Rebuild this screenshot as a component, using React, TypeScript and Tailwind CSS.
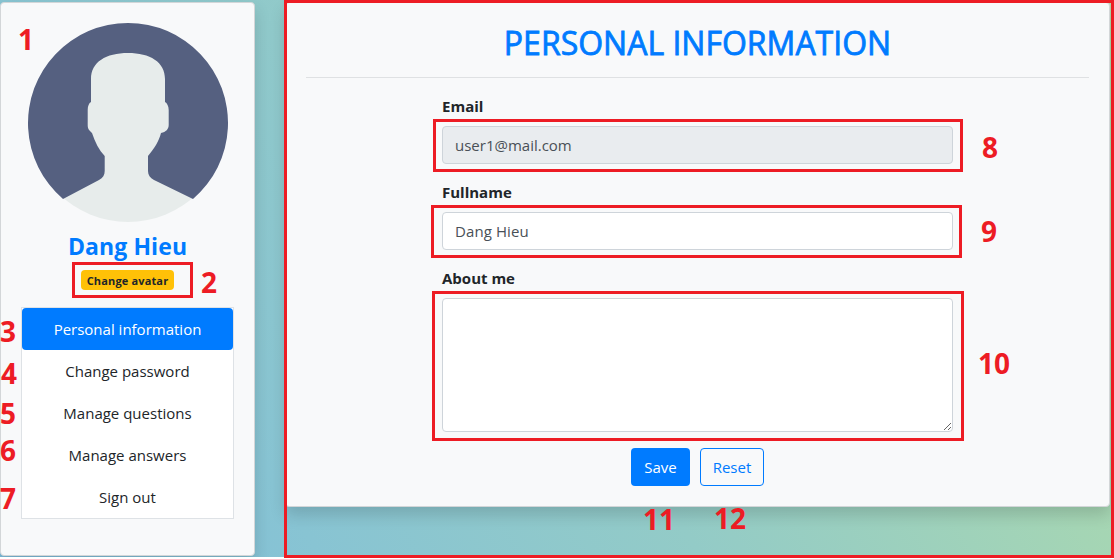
import React from "react";

const MENU = ["Personal information", "Change password", "Manage questions", "Manage answers", "Sign out"];

const MARKS = [
  { n: "1", pos: "left-[18px] top-[20px]" },
  { n: "2", pos: "left-[201px] top-[263px]" },
  { n: "3", pos: "left-[0px] top-[312px]" },
  { n: "4", pos: "left-[1px] top-[354px]" },
  { n: "5", pos: "left-[0px] top-[394px]" },
  { n: "6", pos: "left-[0px] top-[431px]" },
  { n: "7", pos: "left-[0px] top-[479px]" },
  { n: "8", pos: "left-[982px] top-[128px]" },
  { n: "9", pos: "left-[981px] top-[212px]" },
  { n: "10", pos: "left-[978px] top-[344px]" },
  { n: "11", pos: "left-[643px] top-[500px]" },
  { n: "12", pos: "left-[714px] top-[499px]" },
];

const FRAMES = [
  "left-[284px] top-0 h-[558px] w-[830px]",
  "left-[72px] top-[262px] h-[36px] w-[121px]",
  "left-[433px] top-[119px] h-[53px] w-[530px]",
  "left-[431px] top-[205px] h-[53px] w-[531px]",
  "left-[432px] top-[291px] h-[150px] w-[532px]",
];

function Avatar() {
  return (
    <svg className="block h-[200px] w-[200px] shrink-0" viewBox="0 0 200 200" aria-hidden="true">
      <circle cx="100" cy="100" r="99" fill="#e7eceb" />
      <path
        fill="#556080"
        d="M35 176A100 100 0 1 1 165 176L126 157C122 155 120 152 120 148V133C126 126 131 118 133 110C138 109 140.700 106 140.700 102V87C140.700 83 139 80 137 79V56C137 39 122 30 100 30S63 39 63 56V79C61 80 59.700 83 59.700 87V102C59.700 106 61 107 64 110C67 119 71 127 76.700 133V148C76.700 152 75 155 71 157Z"
      />
    </svg>
  );
}

function Field({ label, children }: { label: string; children: React.ReactNode }) {
  return (
    <div className="mb-4 flex flex-col">
      <label className="mb-2 text-[15px] leading-6 font-bold">{label}</label>
      {children}
    </div>
  );
}

export default function App() {
  return (
    <div className="relative h-[559px] w-[1114px] overflow-hidden bg-white font-['Open_Sans','Noto_Sans',sans-serif] text-[15px] text-[#212529]">
      <div className="flex h-[557px] items-start gap-[30px] overflow-hidden bg-[linear-gradient(58deg,#7ebddc_0%,#88c4d3_22%,#93cbc7_48%,#a6d6b3_78%,#aedba9_100%)] pt-[2px]">
        <aside className="flex h-[554px] w-[255px] flex-col items-center rounded border border-[#d3d6d8] bg-[#f8f9fa] px-5 pt-5 shadow-[0_8px_16px_rgba(0,0,0,0.15)]">
          <Avatar />
          <h4 className="mt-[9px] text-[23px] leading-[29px] font-bold tracking-[0.1px] text-[#007bff]">Dang Hieu</h4>
          <button className="mt-[9px] h-5 w-[93px] rounded bg-[#ffc107] pt-px text-[11px] leading-5 font-bold tracking-[0.15px] whitespace-nowrap">Change avatar</button>
          <nav className="mt-[17px] flex w-full flex-col border border-[#dee2e6] bg-white">
            {MENU.map((item, i) => (
              <a key={item} className={i === 0 ? "h-[42px] rounded bg-[#007bff] text-center leading-[42px] text-white" : "h-[42px] text-center leading-[42px]"}>
                {item}
              </a>
            ))}
          </nav>
        </aside>
        <main className="h-[505px] w-[825px] rounded border border-[#d3d6d8] bg-[#f8f9fa] p-5 shadow-[0_8px_16px_rgba(0,0,0,0.15)]">
          <h2 className="pt-px text-center text-[32px] leading-[37px] font-medium whitespace-nowrap text-[#007bff] [-webkit-text-stroke:0.8px_#007bff]">PERSONAL INFORMATION</h2>
          <hr className="my-4 border-t border-[#dfe1e3]" />
          <form className="mx-auto flex w-[511px] flex-col">
            <Field label="Email">
              <input readOnly value="user1@mail.com" className="h-[38px] rounded border border-[#ced4da] bg-[#e9ecef] px-3 text-[#495057] outline-none" />
            </Field>
            <Field label="Fullname">
              <input defaultValue="Dang Hieu" className="h-[38px] rounded border border-[#ced4da] bg-white px-3 tracking-[0.1px] text-[#495057] outline-none" />
            </Field>
            <Field label="About me">
              <textarea className="h-[134px] resize-y rounded border border-[#ced4da] bg-white px-3 py-1.5 text-[#495057] outline-none" />
            </Field>
            <div className="flex justify-center gap-[10px]">
              <button type="button" className="h-[38px] w-[59px] rounded bg-[#007bff] text-white">Save</button>
              <button type="button" className="h-[38px] w-[64px] rounded border border-[#007bff] text-[#007bff]">Reset</button>
            </div>
          </form>
        </main>
      </div>
      {FRAMES.map((f) => (
        <div key={f} className={`pointer-events-none absolute border-[3px] border-[#ed1c24] ${f}`} />
      ))}
      {MARKS.map((m) => (
        <span key={m.n} className={`pointer-events-none absolute text-[28px] leading-[38px] font-bold text-[#ed1c24] ${m.pos}`}>
          {m.n}
        </span>
      ))}
    </div>
  );
}
